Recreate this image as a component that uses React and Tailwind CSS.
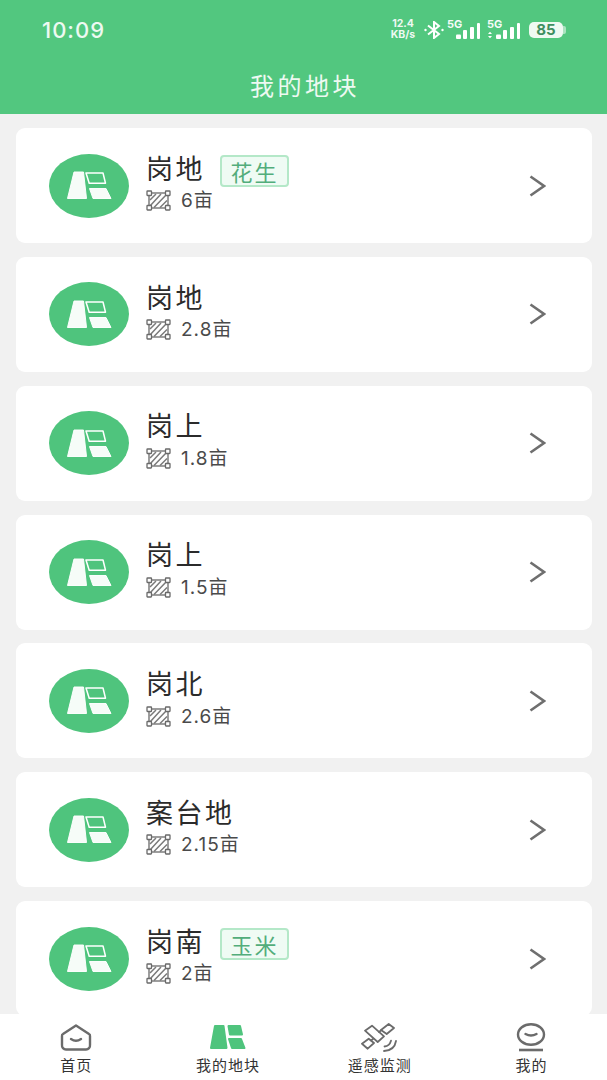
const plots = [
  { name: '岗地', area: '6亩', tag: '花生' },
  { name: '岗地', area: '2.8亩' },
  { name: '岗上', area: '1.8亩' },
  { name: '岗上', area: '1.5亩' },
  { name: '岗北', area: '2.6亩' },
  { name: '案台地', area: '2.15亩' },
  { name: '岗南', area: '2亩', tag: '玉米' },
];

const cjk = "font-['Noto_Sans_CJK_SC',sans-serif]";

function PlotIcon() {
  return (
    <div className="flex h-[64px] w-[80px] shrink-0 items-center justify-center rounded-[50%] bg-[#4fc47d]">
      <svg width="46" height="29" viewBox="0 0 46 29">
        <path d="M8 1L17.500 1L20.500 27.500L1.500 27.500Z" fill="#fff" fillOpacity="0.95" stroke="#fff" strokeOpacity="0.95" strokeLinejoin="round" />
        <path d="M20 2L37 2L39.500 12.300L23.200 12.300Z" fill="none" stroke="#fff" strokeWidth="1.500" strokeLinejoin="round" />
        <path d="M23.500 17.500L40 17.500L45 27.500L27 27.500Z" fill="#fff" fillOpacity="0.95" stroke="#fff" strokeOpacity="0.95" strokeLinejoin="round" />
      </svg>
    </div>
  );
}

function AreaIcon() {
  return (
    <svg width="25" height="21" viewBox="0 0 25 21" className="shrink-0" fill="none" stroke="#6a6a6a">
      <rect x="3" y="3" width="19" height="15" strokeWidth="1.300" />
      <path d="M4 10l6-6M4 16L15 4M8 17.500L21 4M14 17.500l7-7M19 17.500l2.500-2.500" strokeWidth="1.500" stroke="#7a7a7a" />
      <g fill="#fff" strokeWidth="1.300">
        <rect x="1" y="1" width="4.500" height="4.500" rx="0.500" />
        <rect x="19.500" y="1" width="4.500" height="4.500" rx="0.500" />
        <rect x="1" y="15.500" width="4.500" height="4.500" rx="0.500" />
        <rect x="19.500" y="15.500" width="4.500" height="4.500" rx="0.500" />
      </g>
    </svg>
  );
}

function PlotCard({ name, area, tag }) {
  return (
    <div className="flex h-[115px] shrink-0 items-center rounded-[9px] bg-white pl-[33px] pr-[46px]">
      <PlotIcon />
      <div className="mb-[5px] ml-[17px] flex-1">
        <div className="flex h-[32px] items-center">
          <span className="pb-[7px] text-[27px] leading-none tracking-[2.500px] text-[#2b2b2b]">{name}</span>
          {tag && (
            <span className="ml-[15px] flex h-[32px] w-[69px] items-center justify-center rounded-[4px] border-2 border-[#b4e8c8] bg-[#effbf4] text-[22px] leading-none tracking-[2px] text-[#52ad7b]">
              {tag}
            </span>
          )}
        </div>
        <div className="mt-[3.500px] flex h-[21px] items-center gap-[10px]">
          <AreaIcon />
          <span className="text-[19px] leading-none tracking-[1px] text-[#4a4a4a] font-['Inter','Noto_Sans_CJK_SC',sans-serif]">{area}</span>
        </div>
      </div>
      <svg width="17" height="22" viewBox="0 0 17 22" fill="none" stroke="#6f6f6f" strokeWidth="2.600" className="shrink-0">
        <path d="M1.500 1.500L15 11L1.500 20.500" />
      </svg>
    </div>
  );
}

function Signal({ arrows }) {
  return (
    <svg width="34" height="23" viewBox="0 -3 34 23" fill="#fff">
      <text x="0" y="8" fontSize="11" fontWeight="700" fontFamily="Inter, sans-serif" fillOpacity="0.95">5G</text>
      {arrows && <path d="M1 14l2-2.200 2 2.200zM1 16l2 2.200 2-2.200z" />}
      <rect x="9" y="14.500" width="5" height="4.500" rx="1" />
      <rect x="16" y="10" width="4" height="9" rx="1" />
      <rect x="23" y="7" width="4" height="12" rx="1" />
      <rect x="30" y="3" width="3" height="16" rx="1" />
    </svg>
  );
}

function StatusIcons() {
  return (
    <div className="flex items-center text-white">
      <div className="flex w-[26px] flex-col items-center text-[10.500px] font-bold leading-[10.500px] opacity-90 font-['Inter',sans-serif]">
        <span>12.4</span>
        <span>KB/s</span>
      </div>
      <svg width="20" height="18" viewBox="0 0 20 18" fill="none" stroke="#fff" strokeWidth="2" className="ml-[8px]">
        <path d="M4 4.500L15 13L10 17V1L15 5L4 13.500" />
        <circle cx="1.500" cy="9" r="1.200" fill="#fff" stroke="none" />
        <circle cx="18.500" cy="9" r="1.200" fill="#fff" stroke="none" />
      </svg>
      <span className="ml-[3px] -mt-[3px] flex"><Signal /></span>
      <span className="ml-[6px] -mt-[3px] flex"><Signal arrows /></span>
      <div className="ml-[8px] flex items-center">
        <div className="flex h-[16px] w-[34px] items-center justify-center rounded-[5px] bg-[#eefaf2] text-[15px] font-bold leading-none text-[#3f8f60] font-['Inter',sans-serif]">85</div>
        <div className="h-[8px] w-[3px] rounded-r-[2px] bg-white/50" />
      </div>
    </div>
  );
}

function NavIcon({ type }) {
  if (type === 'home') {
    return (
      <svg width="32" height="27" viewBox="0 0 32 27" fill="none" stroke="#6b6b6b" strokeWidth="2.400">
        <path d="M16 1.500l13 8.500a2 2 0 0 1 1 2V21a4 4 0 0 1-4 4.500H6a4 4 0 0 1-4-4.500v-9a2 2 0 0 1 1-2z" strokeLinejoin="round" />
        <path d="M11 15q5 3.500 10 0" strokeLinecap="round" />
      </svg>
    );
  }
  if (type === 'plots') {
    return (
      <svg width="36" height="24" viewBox="0 0 36 24" fill="#4fc47d" stroke="#4fc47d" strokeWidth="2" strokeLinejoin="round">
        <path d="M5 1L13.500 1L16.500 23L1 23Z" />
        <path d="M18.500 1L30 1L32 9.500L20 9.500Z" />
        <path d="M19 14L31 14L34.500 23L22 23Z" />
      </svg>
    );
  }
  if (type === 'satellite') {
    return (
      <svg width="36" height="29" viewBox="0 0 36 29" fill="none" stroke="#6b6b6b" strokeWidth="1.800" strokeLinejoin="round" strokeLinecap="round">
        <path d="M20 7L27.700 1L33 5L25.700 11Z" />
        <path d="M1 20.700L7.700 15.700L13 20L6.700 25.700Z" />
        <path d="M4 7.700L11 2.700L23 13.300L16.700 19Z" />
        <path d="M18 9l2.500-2M10 17.500l2-1.500" />
        <path d="M23.500 23.500Q28.500 23 30 17.700M23 28Q33.500 27.500 35 18" />
      </svg>
    );
  }
  return (
    <svg width="30" height="29" viewBox="0 0 30 29" fill="none" stroke="#6b6b6b" strokeWidth="2.400">
      <ellipse cx="15" cy="11.500" rx="13" ry="10.300" />
      <path d="M9.500 11q5.500 3 11 0" strokeLinecap="round" />
      <path d="M3 27h24" strokeWidth="2.600" />
    </svg>
  );
}

const tabs = [
  { type: 'home', label: '首页' },
  { type: 'plots', label: '我的地块' },
  { type: 'satellite', label: '遥感监测' },
  { type: 'me', label: '我的' },
];

export default function App() {
  return (
    <div className={`flex h-[1080px] w-[607px] flex-col overflow-hidden bg-[#f1f1f1] ${cjk}`}>
      {/* Header */}
      <div className="h-[114px] shrink-0 bg-[#52c77f] text-white">
        <div className="flex h-[57px] items-center justify-between pl-[42px] pr-[41px] pt-[2px]">
          <span className="text-[22px] font-medium leading-none tracking-[1px] text-white/90 font-['Inter',sans-serif]">10:09</span>
          <StatusIcons />
        </div>
        <div className="mt-[10px] pl-[3px] text-center text-[24px] leading-[36px] tracking-[3.500px] text-white/90">我的地块</div>
      </div>

      {/* Plot list */}
      <div className="flex min-h-0 flex-1 flex-col gap-[13.850px] overflow-hidden pl-[16px] pr-[15px] pt-[14px]">
        {plots.map((plot, i) => (
          <PlotCard key={i} {...plot} />
        ))}
      </div>

      {/* Bottom nav */}
      <div className="grid h-[66px] shrink-0 grid-cols-4 bg-white">
        {tabs.map((tab) => (
          <div key={tab.label} className="flex flex-col items-center">
            <div className="flex h-[41px] items-center justify-center pt-[5px]">
              <NavIcon type={tab.type} />
            </div>
            <span className="pl-[1px] text-[15px] leading-[20px] tracking-[1px] text-[#333]">{tab.label}</span>
          </div>
        ))}
      </div>
    </div>
  );
}
